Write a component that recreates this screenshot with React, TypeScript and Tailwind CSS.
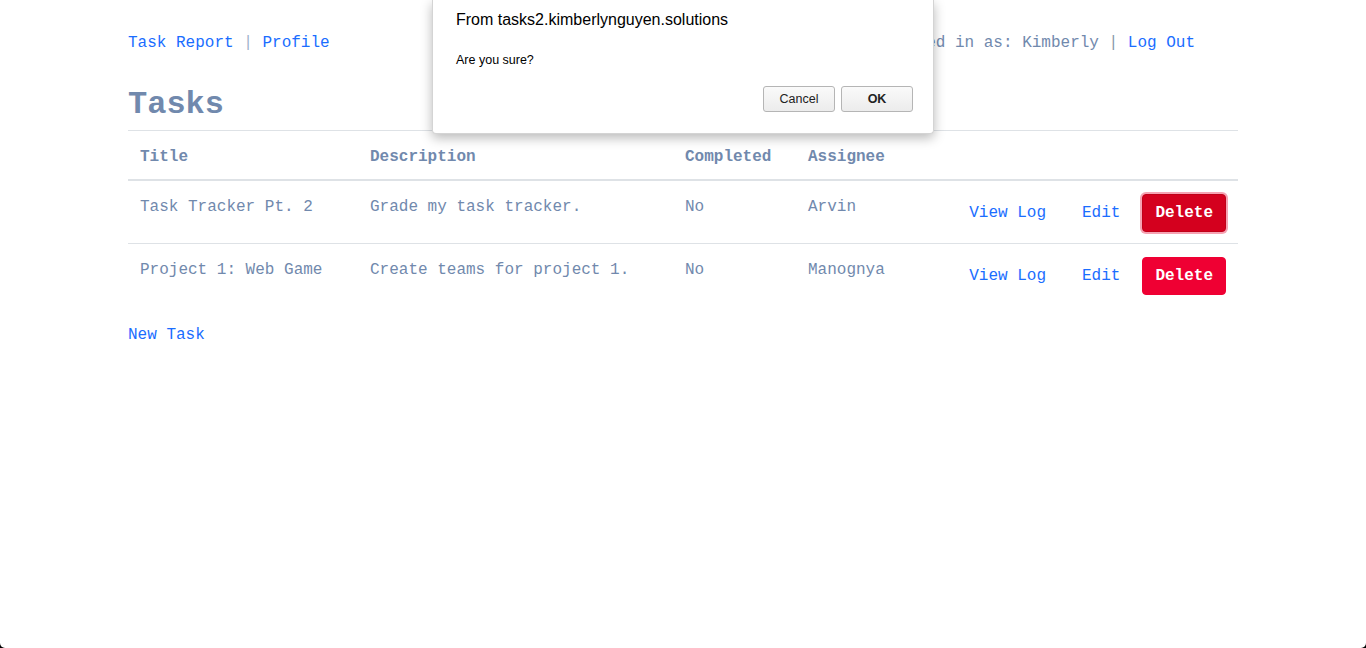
import React from 'react'

const mono = "font-['Liberation_Mono','Courier_New',monospace]"
const sans = "font-['Liberation_Sans',Arial,sans-serif]"

const tasks = [
  { title: 'Task Tracker Pt. 2', desc: 'Grade my task tracker.', done: 'No', who: 'Arvin', focused: true },
  { title: 'Project 1: Web Game', desc: 'Create teams for project 1.', done: 'No', who: 'Manognya', focused: false },
]

function ConfirmDialog() {
  return (
    <div className={`absolute left-[432px] top-0 w-[502px] h-[134px] bg-white border border-[#d4d4d4] border-t-0 rounded-b-[4px] shadow-[0_4px_12px_rgba(0,0,0,0.28)] ${sans}`}>
      <div className="pl-[23px] pt-[10px] text-[16px] leading-[20px] text-black">From tasks2.kimberlynguyen.solutions</div>
      <div className="pl-[23px] pt-[21px] text-[12.5px] leading-[18px] text-black">Are you sure?</div>
      <div className="flex justify-end gap-[6px] pr-[20px] pt-[17px]">
        <button className="w-[72px] h-[26px] rounded-[3px] border border-[#b5b5b5] bg-gradient-to-b from-[#fafafa] to-[#ececec] text-[12.5px] text-[#222]">Cancel</button>
        <button className="w-[72px] h-[26px] rounded-[3px] border border-[#b5b5b5] bg-gradient-to-b from-[#fafafa] to-[#ececec] text-[12.5px] font-bold text-[#222]">OK</button>
      </div>
    </div>
  )
}

export default function App() {
  return (
    <div className="bg-black w-[1366px] h-[648px]">
      <div className={`relative w-[1366px] h-[648px] bg-white rounded-b-[5px] overflow-hidden ${mono} text-[16px] leading-[24px] text-[#7189ad]`}>
        <div className="w-[1110px] ml-[128px]">
          <nav className="flex justify-between pt-[31px] mr-[43px]">
            <div className="whitespace-pre">
              <a className="text-[#1a6dff]">Task Report</a>
              <span className="text-[#9fb2cc]"> | </span>
              <a className="text-[#1a6dff]">Profile</a>
            </div>
            <div className="whitespace-pre">
              <span>Logged in as: Kimberly</span>
              <span className="text-[#8a98a8]"> | </span>
              <a className="text-[#1a6dff]">Log Out</a>
            </div>
          </nav>
          <h1 className="mt-[32px] text-[32px] leading-[36px] font-bold">Tasks</h1>
          <table className="mt-[7px] w-full border-collapse">
            <thead>
              <tr className="border-t border-[#dee2e6] border-b-2 text-left">
                <th className="w-[230px] px-[12px] pt-[14px] pb-[10px] font-bold">Title</th>
                <th className="w-[315px] px-[12px] pt-[14px] pb-[10px] font-bold">Description</th>
                <th className="w-[123px] px-[12px] pt-[14px] pb-[10px] font-bold">Completed</th>
                <th className="w-[149px] px-[12px] pt-[14px] pb-[10px] font-bold">Assignee</th>
                <th className="p-[12px]"></th>
              </tr>
            </thead>
            <tbody>
              {tasks.map((t) => (
                <tr key={t.title} className="border-t border-[#dee2e6] align-top">
                  <td className="px-[12px] pt-[14px] pb-[10px]">{t.title}</td>
                  <td className="px-[12px] pt-[14px] pb-[10px]">{t.desc}</td>
                  <td className="px-[12px] pt-[14px] pb-[10px]">{t.done}</td>
                  <td className="px-[12px] pt-[14px] pb-[10px]">{t.who}</td>
                  <td className="px-[12px] pt-[13px] pb-[11px]">
                    <div className="flex justify-end items-center">
                      <a className="px-[12px] py-[7px] text-[#1a6dff] leading-[24px]">View Log</a>
                      <a className="ml-[12px] px-[12px] py-[7px] text-[#1a6dff] leading-[24px]">Edit</a>
                      {t.focused ? (
                        <button className="ml-[10px] h-[38px] px-[12px] rounded-[4px] border border-[#c00018] bg-[#d4001e] text-white font-bold shadow-[0_0_0_2px_#f5a3b3]">Delete</button>
                      ) : (
                        <button className="ml-[10px] h-[38px] px-[12px] rounded-[4px] border border-[#ef0033] bg-[#ef0033] text-white font-bold">Delete</button>
                      )}
                    </div>
                  </td>
                </tr>
              ))}
            </tbody>
          </table>
          <div className="mt-[17px]">
            <a className="text-[#1a6dff]">New Task</a>
          </div>
        </div>
        <ConfirmDialog />
      </div>
    </div>
  )
}
